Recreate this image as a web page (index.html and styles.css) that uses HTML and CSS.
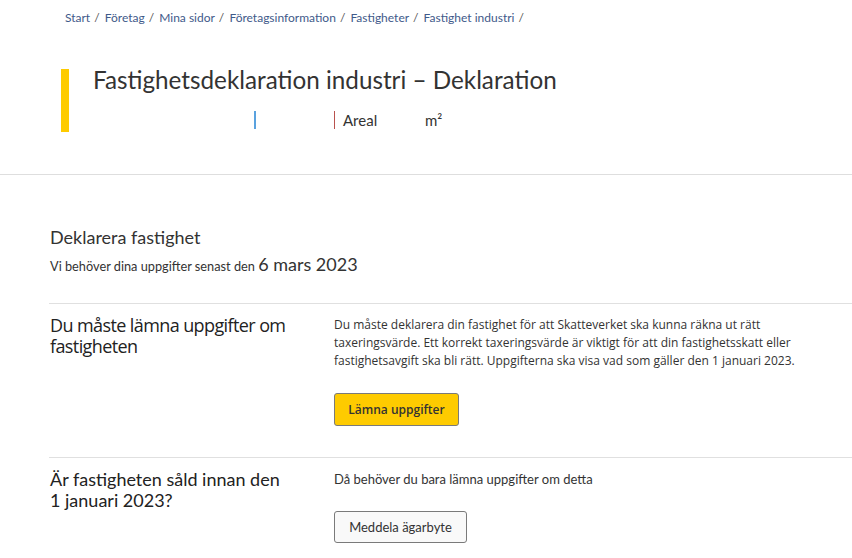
FILE: index.html
```html
<!DOCTYPE html>
<html lang="sv">
<head>
<meta charset="utf-8">
<title>Fastighetsdeklaration industri – Deklaration</title>
<link rel="stylesheet" href="styles.css">
</head>
<body>
<header class="page-head">
  <nav class="crumbs">
    <a href="#">Start</a><span class="sep">/</span>
    <a href="#">Företag</a><span class="sep">/</span>
    <a href="#">Mina sidor</a><span class="sep">/</span>
    <a href="#">Företagsinformation</a><span class="sep">/</span>
    <a href="#">Fastigheter</a><span class="sep">/</span>
    <a href="#">Fastighet industri</a><span class="sep">/</span>
  </nav>
  <div class="title-block">
    <div class="accent"></div>
    <div class="title-text">
      <h1>Fastighetsdeklaration industri – Deklaration</h1>
      <div class="meta">
        <span class="meta-item blue"></span>
        <span class="meta-item red">Areal</span>
        <span class="unit">m²</span>
      </div>
    </div>
  </div>
</header>
<main class="content">
  <section class="intro">
    <h2>Deklarera fastighet</h2>
    <p class="deadline">Vi behöver dina uppgifter senast den <span class="date">6 mars 2023</span></p>
  </section>
  <section class="row">
    <h3 class="row-title cond">Du måste lämna uppgifter om fastigheten</h3>
    <div class="row-body">
      <p class="text cond">Du måste deklarera din fastighet för att Skatteverket ska kunna räkna ut rätt taxeringsvärde. Ett korrekt taxeringsvärde är viktigt för att din fastighetsskatt eller fastighetsavgift ska bli rätt. Uppgifterna ska visa vad som gäller den 1 januari 2023.</p>
      <button class="btn primary">Lämna uppgifter</button>
    </div>
  </section>
  <section class="row">
    <h3 class="row-title">Är fastigheten såld innan den 1 januari 2023?</h3>
    <div class="row-body">
      <p class="text small">Då behöver du bara lämna uppgifter om detta</p>
      <button class="btn secondary">Meddela ägarbyte</button>
    </div>
  </section>
</main>
</body>
</html>
```

FILE: styles.css
```css
html, body {
  margin: 0;
  padding: 0;
  background: #fff;
  overflow: hidden;
}
body {
  font-family: Lato, "Open Sans", sans-serif;
  color: #333;
}
.page-head {
  border-bottom: 1px solid #dedede;
  padding: 10px 0 42px 0;
}
.crumbs {
  padding-left: 65px;
  font-size: 12px;
  line-height: 16px;
}
.crumbs a {
  color: #3f5a8a;
  text-decoration: none;
}
.crumbs .sep {
  margin: 0 2px 0 4px;
  color: #555;
}
.title-block {
  display: flex;
  margin-top: 43px;
  padding-left: 61px;
}
.accent {
  width: 8px;
  height: 63px;
  background: #fecb00;
}
.title-text {
  padding-left: 24px;
}
h1 {
  margin: -5px 0 0 0;
  font-size: 24.25px;
  font-weight: 400;
  line-height: 32px;
  color: #333;
}
.meta {
  display: flex;
  align-items: center;
  margin-top: 15px;
  font-size: 15px;
  line-height: 18px;
  padding-left: 161px;
}
.meta-item {
  display: inline-block;
  height: 18px;
  padding-left: 8px;
}
.meta-item.blue {
  border-left: 2px solid #5aa2df;
  width: 70px;
}
.meta-item.red {
  border-left: 1px solid #b9524e;
  width: 82px;
}
.unit {
  display: inline-block;
}
.content {
  padding: 50px 0 0 49px;
}
.intro h2 {
  margin: 0;
  font-size: 18px;
  font-weight: 400;
  line-height: 24px;
  padding-left: 1px;
}
.deadline {
  margin: 3px 0 0 1px;
  font-size: 12.75px;
  line-height: 24px;
}
.deadline .date {
  font-size: 18px;
}
.row {
  display: flex;
  border-top: 1px solid #e0e0e0;
  padding-top: 11px;
}
.intro + .row {
  margin-top: 25px;
}
.row + .row {
  margin-top: 31px;
}
.row-title {
  width: 240px;
  margin: 0 44px 0 0;
  flex: none;
  padding-left: 1px;
  font-size: 18px;
  font-weight: 400;
  line-height: 21px;
  color: #222;
}
.row-title.cond {
  font-family: "Open Sans", sans-serif;
  font-stretch: 95%;
  letter-spacing: -0.6px;
  font-size: 18px;
  width: 260px;
  margin-right: 24px;
}
.cond {
  font-family: "Open Sans", sans-serif;
  font-stretch: 95%;
}
.row-body {
  width: 470px;
}
.text {
  margin: 1px 0 0 0;
  font-size: 12px;
  line-height: 18px;
  color: #333;
}
.text.small {
  font-family: Lato, sans-serif;
  font-size: 13px;
  margin-top: 1px;
}
.btn {
  display: block;
  line-height: 18px;
  color: #333;
  border-radius: 3px;
  cursor: pointer;
}
.btn.primary {
  margin-top: 23px;
  width: 125px;
  height: 33px;
  background: #fecb00;
  border: 1px solid #7a7a7a;
  font-family: "Open Sans", sans-serif;
  font-weight: 600;
  font-size: 12px;
}
.btn.secondary {
  margin-top: 23px;
  width: 133px;
  height: 32px;
  background: #f9f9f9;
  border: 1px solid #7a7a7a;
  font-family: Lato, sans-serif;
  font-size: 13px;
}
```
